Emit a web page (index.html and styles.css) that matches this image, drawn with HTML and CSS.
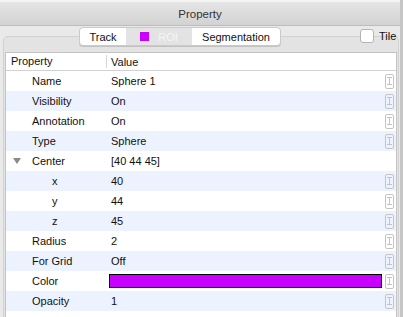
FILE: index.html
```html
<!DOCTYPE html>
<html lang="en">
<head>
    <meta charset="UTF-8">
    <title>Property</title>
    <link rel="stylesheet" href="styles.css">
</head>
<body>
    <div class="window">
        <div class="titlebar">Property</div>

        <div class="toolbar">
            <div class="segments">
                <div class="segment seg-track">Track</div>
                <div class="segment seg-roi selected"><span class="swatch"></span>ROI</div>
                <div class="segment seg-seg">Segmentation</div>
            </div>
            <label class="tile"><span class="checkbox"></span>Tile</label>
        </div>

        <div class="groupbox">
            <div class="table">
                <div class="header">
                    <div class="col-name">Property</div>
                    <div class="col-value">Value</div>
                </div>

                <div class="row">
                    <div class="name">Name</div>
                    <div class="value">Sphere 1</div>
                    <span class="edit"></span>
                </div>
                <div class="row alt">
                    <div class="name">Visibility</div>
                    <div class="value">On</div>
                    <span class="edit"></span>
                </div>
                <div class="row">
                    <div class="name">Annotation</div>
                    <div class="value">On</div>
                    <span class="edit"></span>
                </div>
                <div class="row alt">
                    <div class="name">Type</div>
                    <div class="value">Sphere</div>
                    <span class="edit"></span>
                </div>
                <div class="row">
                    <div class="name"><span class="disclosure"></span>Center</div>
                    <div class="value">[40 44 45]</div>
                </div>
                <div class="row alt">
                    <div class="name child">x</div>
                    <div class="value">40</div>
                    <span class="edit"></span>
                </div>
                <div class="row">
                    <div class="name child">y</div>
                    <div class="value">44</div>
                    <span class="edit"></span>
                </div>
                <div class="row alt">
                    <div class="name child">z</div>
                    <div class="value">45</div>
                    <span class="edit"></span>
                </div>
                <div class="row">
                    <div class="name">Radius</div>
                    <div class="value">2</div>
                    <span class="edit"></span>
                </div>
                <div class="row alt">
                    <div class="name">For Grid</div>
                    <div class="value">Off</div>
                    <span class="edit"></span>
                </div>
                <div class="row">
                    <div class="name">Color</div>
                    <div class="value color-cell"><span class="color-bar"></span></div>
                    <span class="edit"></span>
                </div>
                <div class="row alt">
                    <div class="name">Opacity</div>
                    <div class="value">1</div>
                    <span class="edit"></span>
                </div>
                <div class="row">
                    <div class="name"></div>
                    <div class="value"></div>
                </div>
            </div>
        </div>
    </div>
</body>
</html>
```

FILE: styles.css
```css
body {
    margin: 0;
    width: 403px;
    height: 317px;
    overflow: hidden;
    background-color: #e4e4e4;
    font-family: "Liberation Sans", Arial, sans-serif;
    font-size: 11px;
    color: #111;
}

.window {
    width: 400px;
    height: 317px;
    border-right: 3px solid #c6c6c6;
    background-color: #e9e9e9;
    display: flex;
    flex-direction: column;
    overflow: hidden;
}

.titlebar {
    flex-shrink: 0;
    height: 23px;
    border-top: 2px solid #f3f3f3;
    border-bottom: 1px solid #bdbdbd;
    background: linear-gradient(#e6e6e6, #d2d2d2);
    display: flex;
    align-items: center;
    justify-content: center;
    color: #333;
    font-size: 11.5px;
}

.toolbar {
    flex-shrink: 0;
    position: relative;
    z-index: 1;
    height: 20px;
    display: flex;
    align-items: flex-start;
    padding-left: 79px;
}

.segments {
    margin-top: 1px;
    display: flex;
    height: 17px;
    border: 1px solid #cacaca;
    border-radius: 4px;
    background-color: #fff;
    box-shadow: 0 1px 0 #c2c2c2;
    overflow: hidden;
}

.segment {
    display: flex;
    align-items: center;
    justify-content: center;
    color: #111;
}

.seg-track {
    width: 46px;
}

.seg-roi {
    width: 66px;
}

.seg-seg {
    width: 88px;
}

.segment.selected {
    background-color: #e3e3e3;
    color: #f6f6f6;
}

.swatch {
    width: 9px;
    height: 9px;
    background-color: #c800ff;
    margin-right: 9px;
}

.tile {
    margin-left: 79px;
    margin-top: 3px;
    display: flex;
    align-items: center;
    white-space: nowrap;
    color: #111;
}

.checkbox {
    width: 12px;
    height: 12px;
    border: 1px solid #b4b4b4;
    border-radius: 3px;
    background-color: #fff;
    margin-right: 5px;
}

.groupbox {
    margin: -10px 1px 0 3px;
    flex: 1;
    min-height: 0;
    border: 1px solid #d2d2d2;
    border-bottom: none;
    border-radius: 5px 5px 0 0;
    background-color: #e3e3e3;
    padding: 15px 0 0 1px;
}

.table {
    width: 390px;
    height: 100%;
    overflow: hidden;
    background-color: #fff;
    border: 1px solid #c4c4c4;
    border-bottom: none;
}

.header {
    height: 17px;
    display: flex;
    align-items: center;
    border-bottom: 1px solid #d2d2d2;
}

.header .col-name {
    width: 95px;
    padding-left: 5px;
    border-right: 1px solid #d6d6d6;
    line-height: 13px;
}

.header .col-value {
    padding-left: 4px;
}

.row {
    height: 20px;
    display: flex;
    align-items: center;
}

.row.alt {
    background-color: #edf3fe;
}

.name {
    width: 75px;
    padding-left: 26px;
    display: flex;
    align-items: center;
}

.name.child {
    width: 55px;
    padding-left: 46px;
}

.disclosure {
    width: 0;
    height: 0;
    border-left: 4px solid transparent;
    border-right: 4px solid transparent;
    border-top: 6px solid #8a8a8a;
    margin-left: -19px;
    margin-right: 11px;
}

.value {
    flex: 1;
    padding-left: 4px;
}

.color-cell {
    padding-left: 2px;
    display: flex;
}

.color-bar {
    flex: 1;
    height: 12px;
    border: 1px solid #000;
    background-color: #c800ff;
}

.edit {
    width: 7px;
    height: 13px;
    margin: 0 2px 0 3px;
    border: 1px solid #c4c4c4;
    border-radius: 2px;
    background:
        linear-gradient(#c4c4c4, #c4c4c4) center 2px / 5px 1px no-repeat,
        linear-gradient(#c4c4c4, #c4c4c4) center 9px / 5px 1px no-repeat,
        linear-gradient(#c4c4c4, #c4c4c4) center / 1px 8px no-repeat;
}
```
